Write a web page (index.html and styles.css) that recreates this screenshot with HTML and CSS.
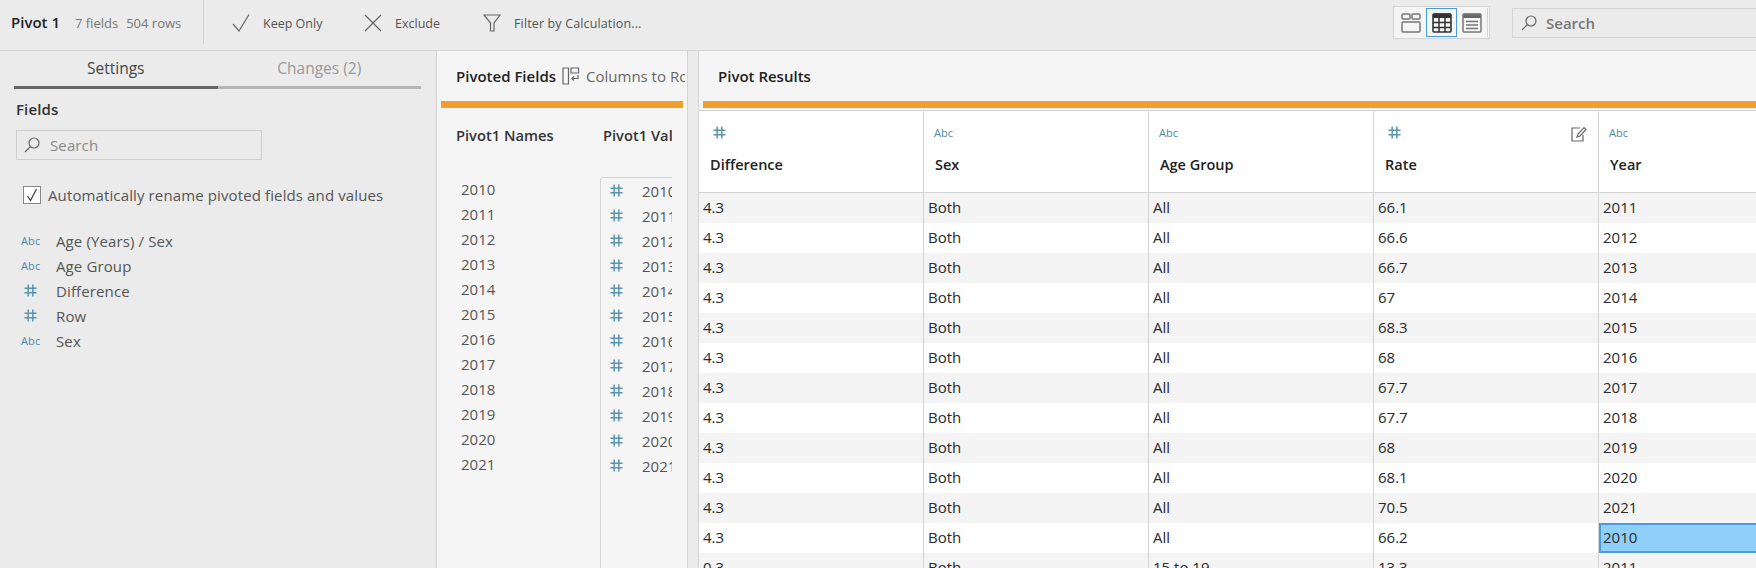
FILE: index.html
```html
<!DOCTYPE html>
<html lang="en">
<head>
    <meta charset="UTF-8">
    <title>Pivot 1</title>
    <link rel="stylesheet" href="styles.css">
</head>
<body>
    <svg class="defs" width="0" height="0">
        <symbol id="hash" viewBox="0 0 14 14">
            <path d="M4.5 0.5V13.5M9.5 0.5V13.5M0.5 4.5H13.5M0.5 9.5H13.5" fill="none" stroke="#5b93b0" stroke-width="1.6"/>
        </symbol>
    </svg>

    <header class="topbar">
        <div class="step-info">
            <span class="step-name">Pivot 1</span>
            <span class="step-count">7 fields</span>
            <span class="step-count">504 rows</span>
        </div>
        <div class="actions">
            <div class="action action-keep">
                <svg width="18" height="18" viewBox="0 0 18 18"><path d="M1 10L7 17L17 0.500" class="icon-line"/></svg>
                <span>Keep Only</span>
            </div>
            <div class="action action-exclude">
                <svg width="18" height="18" viewBox="0 0 18 18"><path d="M1 1L17 17M17 1L1 17" class="icon-line"/></svg>
                <span>Exclude</span>
            </div>
            <div class="action action-filter">
                <svg width="18" height="18" viewBox="0 0 18 18"><path d="M1 1H17L11 9V17H7.500V9Z" class="icon-line"/></svg>
                <span>Filter by Calculation...</span>
            </div>
        </div>
        <div class="view-toggle">
            <div class="view-btn">
                <svg width="20" height="20" viewBox="0 0 20 20">
                    <rect x="1" y="1" width="8" height="5" rx="1" class="icon-thick"/>
                    <rect x="11" y="1" width="8" height="5" rx="1" class="icon-thick"/>
                    <rect x="1" y="9" width="18" height="10" rx="1" class="icon-thick"/>
                </svg>
            </div>
            <div class="view-btn view-btn-on">
                <svg width="20" height="20" viewBox="0 0 20 20">
                    <path d="M1 1.500a1 1 0 0 1 1-1H18a1 1 0 0 1 1 1V5H1Z" fill="#333"/>
                    <rect x="1" y="1" width="18" height="18" rx="1" fill="none" stroke="#333" stroke-width="1.600"/>
                    <path d="M1 9.500H19M1 14.500H19M7 4V19M13 4V19" fill="none" stroke="#333" stroke-width="1.500"/>
                </svg>
            </div>
            <div class="view-btn">
                <svg width="20" height="20" viewBox="0 0 20 20">
                    <path d="M1 1.500a1 1 0 0 1 1-1H18a1 1 0 0 1 1 1V5H1Z" fill="#666"/>
                    <rect x="1" y="1" width="18" height="18" rx="1" class="icon-thick"/>
                    <path d="M4 8.500H16M4 12H16M4 15.500H16" class="icon-thick"/>
                </svg>
            </div>
        </div>
        <div class="top-search">
            <svg width="16" height="16" viewBox="0 0 16 16"><circle cx="10" cy="6" r="5" class="icon-line"/><path d="M6.500 9.500L1 15" class="icon-line"/></svg>
            <span>Search</span>
        </div>
    </header>

    <main class="workspace">
        <aside class="settings">
            <div class="tabs">
                <div class="tab tab-on">Settings</div>
                <div class="tab">Changes (2)</div>
            </div>
            <div class="fields-title">Fields</div>
            <div class="field-search">
                <svg width="16" height="16" viewBox="0 0 16 16"><circle cx="10" cy="6" r="5" class="icon-line"/><path d="M6.500 9.500L1 15" class="icon-line"/></svg>
                <span>Search</span>
            </div>
            <label class="auto-rename">
                <span class="checkbox">
                    <svg width="12" height="14" viewBox="0 0 12 14"><path d="M1.500 8L4.500 12.500L10.500 1" fill="none" stroke="#444" stroke-width="1.300"/></svg>
                </span>
                Automatically rename pivoted fields and values
            </label>
            <ul class="field-list">
                <li><span class="type-abc">Abc</span>Age (Years) / Sex</li>
                <li><span class="type-abc">Abc</span>Age Group</li>
                <li><span class="type-num"><svg width="13" height="13"><use href="#hash"/></svg></span>Difference</li>
                <li><span class="type-num"><svg width="13" height="13"><use href="#hash"/></svg></span>Row</li>
                <li><span class="type-abc">Abc</span>Sex</li>
            </ul>
        </aside>

        <section class="pivot-fields">
            <div class="panel-head">
                <span class="panel-title">Pivoted Fields</span>
                <svg width="18" height="18" viewBox="0 0 18 18"><path d="M1 1H6.500V17H1ZM9 1H16.500V6H9Z" class="icon-line"/><path d="M16 8V11.500H10M12 9.500L10 11.500L12 13.500" class="icon-line"/></svg>
                <span class="panel-sub">Columns to Rows</span>
            </div>
            <div class="orange-bar"></div>
            <div class="pivot-grid">
                <div class="pivot-names">
                    <div class="pivot-head">Pivot1 Names</div>
                    <ul id="name-list" class="name-list"></ul>
                </div>
                <div class="pivot-values">
                    <div class="pivot-head pivot-head-values">Pivot1 Values</div>
                    <ul id="value-list" class="value-list"></ul>
                </div>
            </div>
        </section>

        <section class="results">
            <div class="results-head">
                <span class="panel-title">Pivot Results</span>
            </div>
            <div class="orange-bar orange-bar-wide"></div>
            <div class="result-table">
                <div class="col-head">
                    <div class="col-type"><svg width="13" height="13"><use href="#hash"/></svg></div>
                    <div class="col-name">Difference</div>
                </div>
                <div class="col-head">
                    <div class="col-type type-abc">Abc</div>
                    <div class="col-name">Sex</div>
                </div>
                <div class="col-head">
                    <div class="col-type type-abc">Abc</div>
                    <div class="col-name">Age Group</div>
                </div>
                <div class="col-head">
                    <div class="col-type"><svg width="13" height="13"><use href="#hash"/></svg></div>
                    <div class="col-name">Rate</div>
                    <svg class="edit-icon" width="16" height="16" viewBox="0 0 16 16"><path d="M9 2H1V15H12V9" class="icon-line"/><path d="M6 11L7 8L13 1.500L15 3.500L9 10Z" class="icon-line"/></svg>
                </div>
                <div class="col-head">
                    <div class="col-type type-abc">Abc</div>
                    <div class="col-name">Year</div>
                </div>
                <div id="result-rows" class="result-rows"></div>
            </div>
        </section>
    </main>

    <script src="script.js"></script>
</body>
</html>
```

FILE: styles.css
```css
* {
    box-sizing: border-box;
}

html, body {
    margin: 0;
    height: 100%;
    overflow: hidden;
}

body {
    font-family: 'Open Sans', sans-serif;
    font-size: 15px;
    color: #333;
    background-color: #ebebeb;
    display: flex;
    flex-direction: column;
}

ul {
    list-style: none;
    margin: 0;
    padding: 0;
}

.defs {
    position: absolute;
}

.icon-line {
    fill: none;
    stroke: #666;
    stroke-width: 1.2;
}

.icon-thick {
    fill: none;
    stroke: #777;
    stroke-width: 1.5;
}

/* top bar */
.topbar {
    height: 51px;
    flex: none;
    display: flex;
    align-items: flex-start;
    border-bottom: 1px solid #d4d4d4;
}

.step-info {
    width: 204px;
    height: 44px;
    padding: 12px 0 0 11px;
    border-right: 1px solid #d4d4d4;
    display: flex;
    align-items: baseline;
}

.step-name {
    font-weight: 600;
    margin-right: 15px;
    color: #222;
}

.step-count {
    font-size: 13px;
    color: #777;
    margin-right: 8px;
}

.actions {
    display: flex;
    padding: 14px 0 0 28px;
    width: 1189px;
    font-size: 12.5px;
    color: #555;
}

.action {
    display: flex;
    align-items: center;
    gap: 13px;
    height: 18px;
}

.action-keep {
    width: 132px;
}

.action-exclude {
    width: 119px;
}

.action-filter {
    letter-spacing: 0.14px;
}

.view-toggle {
    margin-top: 6px;
    height: 33px;
    padding: 1px;
    display: flex;
    background-color: #f5f5f5;
    border: 1px solid #d4d4d4;
}

.view-btn {
    width: 31px;
    display: flex;
    align-items: center;
    justify-content: center;
}

.view-btn-on {
    border: 1px solid #4a9ae0;
}

.view-btn:last-child {
    border-right: 1px solid #d4d4d4;
}

.top-search {
    margin: 8px 0 0 22px;
    flex: 1;
    height: 30px;
    display: flex;
    align-items: center;
    gap: 9px;
    padding-left: 8px;
    border: 1px solid #d4d4d4;
    border-right: none;
    font-weight: 600;
    color: #777;
}

/* panels */
.workspace {
    flex: 1;
    display: flex;
    min-height: 0;
}

.settings {
    width: 437px;
    flex: none;
    padding: 0 15px 0 14px;
    border-right: 1px solid #d4d4d4;
    letter-spacing: 0.12px;
}

.tabs {
    display: flex;
    height: 38px;
}

.tab {
    flex: 1;
    text-align: center;
    padding-top: 6px;
    font-size: 15.5px;
    letter-spacing: 0;
    color: #999;
    border-bottom: 3px solid #b5b5b5;
}

.tab-on {
    color: #444;
    border-bottom-color: #666;
}

.fields-title {
    margin: 10px 0 0 2px;
    font-weight: 600;
    color: #333;
}

.field-search {
    margin: 11px 0 0 2px;
    width: 246px;
    height: 30px;
    display: flex;
    align-items: center;
    gap: 10px;
    padding-left: 7px;
    border: 1px solid #cfcfcf;
    color: #888;
}

.auto-rename {
    margin: 26px 0 0 9px;
    display: flex;
    align-items: center;
    gap: 7px;
    height: 18px;
    color: #555;
}

.checkbox {
    width: 18px;
    height: 18px;
    display: flex;
    align-items: center;
    justify-content: center;
    background-color: #fff;
    border: 1px solid #888;
}

.field-list {
    margin-top: 24px;
}

.field-list li {
    height: 25px;
    display: flex;
    align-items: center;
    color: #555;
}

.type-abc {
    font-size: 11px;
    color: #4f88aa;
}

.field-list .type-abc,
.field-list .type-num {
    width: 42px;
    padding-left: 7px;
}

.field-list .type-num {
    padding-left: 10px;
    display: flex;
}

.pivot-fields {
    width: 251px;
    flex: none;
    overflow: hidden;
    background-color: #f5f5f5;
    border-right: 1px solid #d4d4d4;
}

.panel-head {
    height: 50px;
    width: 248px;
    overflow: hidden;
    padding-left: 19px;
    display: flex;
    align-items: center;
    white-space: nowrap;
    gap: 6px;
}

.panel-head svg {
    flex: none;
}

.panel-title {
    font-weight: 600;
    color: #222;
}

.panel-sub {
    color: #666;
}

.orange-bar {
    height: 7px;
    margin: 0 4px;
    background-color: #f09e2c;
}

.pivot-grid {
    display: flex;
    padding-left: 19px;
}

.pivot-head {
    font-size: 14.7px;
    font-weight: 600;
    color: #333;
    white-space: nowrap;
    padding-top: 17px;
    height: 69px;
}

.pivot-head-values {
    padding-left: 3px;
}

.pivot-names {
    width: 144px;
}

.name-list {
    padding-left: 5px;
}

.name-list li {
    height: 25px;
    line-height: 25px;
    color: #555;
}

.pivot-values {
    width: 72px;
    overflow: hidden;
}

.value-list {
    border-left: 1px solid #d4d4d4;
    border-top: 1px solid #d4d4d4;
    border-top-left-radius: 3px;
    height: 400px;
}

.value-list li {
    height: 25px;
    display: flex;
    align-items: center;
    gap: 19px;
    padding-left: 9px;
    color: #555;
    white-space: nowrap;
}

.value-list svg {
    flex: none;
}

.results {
    margin-left: 10px;
    flex: 1;
    min-width: 0;
    overflow: hidden;
    background-color: #f5f5f5;
    border-left: 1px solid #d4d4d4;
}

.results-head {
    height: 50px;
    padding-left: 19px;
    display: flex;
    align-items: center;
}

.orange-bar-wide {
    margin: 0 0 0 4px;
}

.result-table {
    display: grid;
    grid-template-columns: repeat(5, 225px);
    width: 1125px;
    border-top: 1px solid #d4d4d4;
    margin-top: 2px;
}

.col-head {
    height: 82px;
    position: relative;
    background-color: #fff;
    border-right: 1px solid #d4d4d4;
    border-bottom: 1px solid #d4d4d4;
    padding-left: 11px;
}

.col-type {
    height: 43px;
    padding-top: 14px;
    line-height: 16px;
}

.col-type.type-abc {
    margin-left: -1px;
}

.col-head svg {
    margin: 0 0 0 3px;
}

.col-name {
    font-size: 14.5px;
    font-weight: 600;
    color: #222;
    padding-top: 1px;
}

.col-head .edit-icon {
    position: absolute;
    top: 15px;
    right: 11px;
    margin: 0;
}

.result-rows {
    grid-column: 1 / -1;
}

.result-row {
    display: grid;
    grid-template-columns: repeat(5, 225px);
    height: 30px;
    background-color: #fff;
}

.result-row:nth-child(odd) {
    background-color: #f4f4f4;
}

.result-cell {
    padding-left: 4px;
    line-height: 28px;
    color: #2a2a2a;
    border-right: 1px solid #d4d4d4;
}

.result-cell-picked {
    background-color: #90cff8;
    border: 2px solid #4a9ae0;
    line-height: 24px;
    padding-left: 2px;
}
```

FILE: script.js
```js
const years = [2010, 2011, 2012, 2013, 2014, 2015, 2016, 2017, 2018, 2019, 2020, 2021];
const hash = '<svg width="13" height="13"><use href="#hash"/></svg>';

document.getElementById('name-list').innerHTML = years.map(y => `<li>${y}</li>`).join('');
document.getElementById('value-list').innerHTML = years.map(y => `<li>${hash}<span>${y}</span></li>`).join('');

const rates = [
    ['4.3', 'Both', 'All', '66.1', '2011'],
    ['4.3', 'Both', 'All', '66.6', '2012'],
    ['4.3', 'Both', 'All', '66.7', '2013'],
    ['4.3', 'Both', 'All', '67', '2014'],
    ['4.3', 'Both', 'All', '68.3', '2015'],
    ['4.3', 'Both', 'All', '68', '2016'],
    ['4.3', 'Both', 'All', '67.7', '2017'],
    ['4.3', 'Both', 'All', '67.7', '2018'],
    ['4.3', 'Both', 'All', '68', '2019'],
    ['4.3', 'Both', 'All', '68.1', '2020'],
    ['4.3', 'Both', 'All', '70.5', '2021'],
    ['4.3', 'Both', 'All', '66.2', '2010'],
    ['0.3', 'Both', '15 to 19', '13.3', '2011']
];

document.getElementById('result-rows').innerHTML = rates.map((row, r) => {
    const cells = row.map((v, c) => {
        const picked = r === 11 && c === 4 ? ' result-cell-picked' : '';
        return `<div class="result-cell${picked}">${v}</div>`;
    }).join('');
    return `<div class="result-row">${cells}</div>`;
}).join('');
```
